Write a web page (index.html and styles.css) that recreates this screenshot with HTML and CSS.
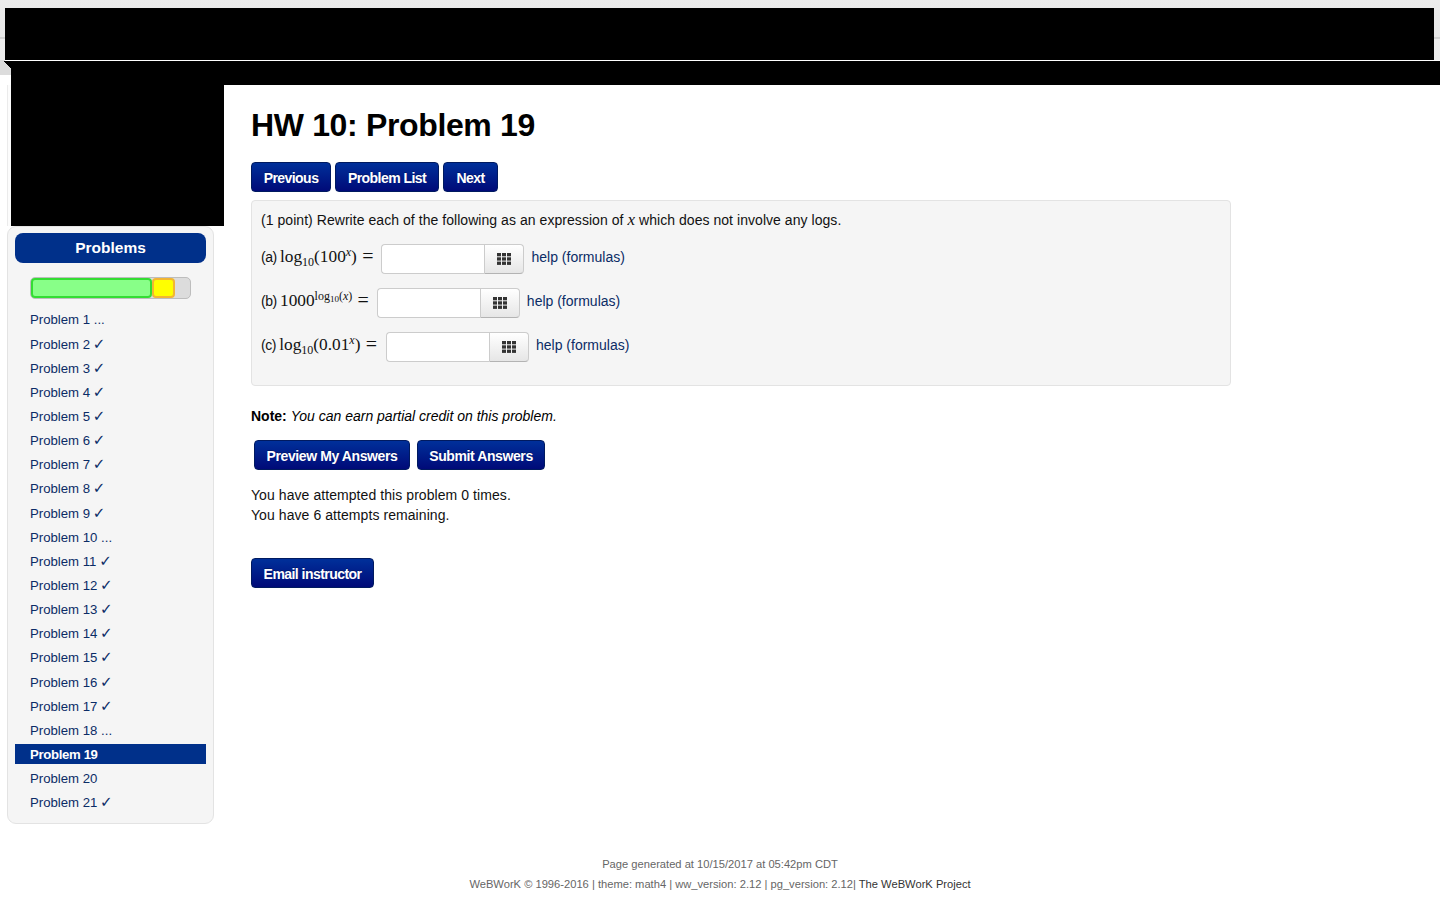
FILE: index.html
```html
<!DOCTYPE html>
<html lang="en">
<head>
<meta charset="utf-8">
<title>HW 10: Problem 19</title>
<link rel="stylesheet" href="styles.css">
</head>
<body>
<svg class="defs" width="0" height="0" aria-hidden="true">
  <symbol id="grid" viewBox="0 0 14 12">
    <rect x="0" y="0" width="4" height="3.3"/><rect x="5" y="0" width="4" height="3.3"/><rect x="10" y="0" width="4" height="3.3"/>
    <rect x="0" y="4.3" width="4" height="3.3"/><rect x="5" y="4.3" width="4" height="3.3"/><rect x="10" y="4.3" width="4" height="3.3"/>
    <rect x="0" y="8.6" width="4" height="3.3"/><rect x="5" y="8.6" width="4" height="3.3"/><rect x="10" y="8.6" width="4" height="3.3"/>
  </symbol>
</svg>
<header class="chrome"><div class="mask mask-top"></div></header>
<div class="strip"></div>
<div class="nav-row"><div class="nav-corner"></div><div class="mask mask-nav"></div></div>
<div class="layout">
  <aside class="side">
    <div class="brand-wrap"><div class="mask mask-brand"></div></div>
    <nav class="panel">
      <h2 class="panel-title">Problems</h2>
      <div class="progress"><div class="seg seg-good"></div><div class="seg seg-part"></div></div>
      <ul class="plist">
        <li><a href="#">Problem 1 ...</a></li>
        <li><a href="#">Problem 2 <span class="chk">✓</span></a></li>
        <li><a href="#">Problem 3 <span class="chk">✓</span></a></li>
        <li><a href="#">Problem 4 <span class="chk">✓</span></a></li>
        <li><a href="#">Problem 5 <span class="chk">✓</span></a></li>
        <li><a href="#">Problem 6 <span class="chk">✓</span></a></li>
        <li><a href="#">Problem 7 <span class="chk">✓</span></a></li>
        <li><a href="#">Problem 8 <span class="chk">✓</span></a></li>
        <li><a href="#">Problem 9 <span class="chk">✓</span></a></li>
        <li><a href="#">Problem 10 ...</a></li>
        <li><a href="#">Problem 11 <span class="chk">✓</span></a></li>
        <li><a href="#">Problem 12 <span class="chk">✓</span></a></li>
        <li><a href="#">Problem 13 <span class="chk">✓</span></a></li>
        <li><a href="#">Problem 14 <span class="chk">✓</span></a></li>
        <li><a href="#">Problem 15 <span class="chk">✓</span></a></li>
        <li><a href="#">Problem 16 <span class="chk">✓</span></a></li>
        <li><a href="#">Problem 17 <span class="chk">✓</span></a></li>
        <li><a href="#">Problem 18 ...</a></li>
        <li class="current"><a href="#">Problem 19</a></li>
        <li><a href="#">Problem 20</a></li>
        <li><a href="#">Problem 21 <span class="chk">✓</span></a></li>
      </ul>
    </nav>
  </aside>
  <main class="main">
    <h1 class="title">HW 10: Problem 19</h1>
    <div class="btn-row">
      <a class="btn btn-prev" href="#">Previous</a>
      <a class="btn btn-list" href="#">Problem List</a>
      <a class="btn btn-next" href="#">Next</a>
    </div>
    <section class="card">
      <p class="lead">(1 point) Rewrite each of the following as an expression of <i class="mi">x</i> which does not involve any logs.</p>
      <div class="answer">
        <span class="label">(a) <span class="math">log<sub>10</sub>(100<sup><i>x</i></sup>) <span class="eq">=</span></span></span>
        <span class="group"><input class="field" type="text" aria-label="answer a"><span class="addon"><svg class="grid-icon"><use href="#grid"/></svg></span></span>
        <a class="help" href="#">help (formulas)</a>
      </div>
      <div class="answer">
        <span class="label">(b) <span class="math">1000<sup class="big-sup">log<sub>10</sub>(<i>x</i>)</sup> <span class="eq">=</span></span></span>
        <span class="group"><input class="field" type="text" aria-label="answer b"><span class="addon"><svg class="grid-icon"><use href="#grid"/></svg></span></span>
        <a class="help" href="#">help (formulas)</a>
      </div>
      <div class="answer">
        <span class="label label-wide">(c) <span class="math">log<sub>10</sub>(0.01<sup><i>x</i></sup>) <span class="eq">=</span></span></span>
        <span class="group"><input class="field" type="text" aria-label="answer c"><span class="addon"><svg class="grid-icon"><use href="#grid"/></svg></span></span>
        <a class="help" href="#">help (formulas)</a>
      </div>
    </section>
    <p class="note"><b>Note:</b> <em>You can earn partial credit on this problem.</em></p>
    <div class="btn-row btn-row-submit">
      <a class="btn btn-preview" href="#">Preview My Answers</a>
      <a class="btn btn-submit" href="#">Submit Answers</a>
    </div>
    <p class="attempts">You have attempted this problem 0 times.<br>You have 6 attempts remaining.</p>
    <a class="btn btn-email" href="#">Email instructor</a>
  </main>
</div>
<footer class="footer">
  <div>Page generated at 10/15/2017 at 05:42pm CDT</div>
  <div>WeBWorK © 1996-2016 | theme: math4 | ww_version: 2.12 | pg_version: 2.12| <a href="#">The WeBWorK Project</a></div>
</footer>
</body>
</html>
```
FILE: styles.css
```css
* { box-sizing: border-box; }
html, body { margin: 0; padding: 0; height: 900px; overflow: hidden; }
body { background: #fff; color: #111; font-family: "Liberation Sans", Arial, sans-serif; font-size: 14px; line-height: 20px; }
.defs { position: absolute; }
a { text-decoration: none; }
.mask { background: #000; }
.chrome { height: 60px; padding: 8px 6px 0 5px; background: linear-gradient(#ececec 0, #e8e8e8 37px, #b9b9b9 38px, #ededed 39px, #ececec 60px); }
.mask-top { height: 52px; }
.strip { height: 1px; background: linear-gradient(90deg, #dcdcdc 5px, #fff 5px); }
.nav-row { display: flex; height: 24px; }
.nav-corner { width: 11px; height: 14px; background: linear-gradient(225deg, #000 5px, #dcdcdc 5.5px); }
.mask-nav { flex: 1; }
.layout { display: grid; grid-template-columns: 224px 1fr; }
.side { display: flex; flex-direction: column; }
.brand-wrap { height: 141px; margin-left: 7px; padding-left: 3px; background: #fcfcfc; border-left: 1px solid #ebebeb; }
.mask-brand { height: 141px; }
.panel { width: 207px; margin-left: 7px; height: 598px; padding: 6px 7px 0; background: #f5f5f5; border: 1px solid #e3e3e3; border-radius: 9px; }
.panel-title { margin: 0; height: 30px; font-size: 15.5px; line-height: 30px; font-weight: 700; text-align: center; color: #fff; background: #00308a; border-radius: 8px; }
.progress { display: flex; width: 161px; height: 22px; margin: 14px 0 10.45px 15px; background: #dcdcdc; border: 1px solid #bdbdbd; border-radius: 5px; }
.seg { height: 100%; border-radius: 4px; }
.seg-good { width: 121px; background: #88ff88; border: 2px solid #33dd33; margin: 0; }
.seg-part { width: 23px; background: #ffff00; border: 2px solid #f2b632; }
.plist { list-style: none; margin: 0; padding: 0; font-size: 13.2px; line-height: 22px; }
.plist li { height: 20px; margin-bottom: 4.15px; padding-left: 15px; }
.plist a { color: #0b2c66; }
.chk { margin-left: -1px; font-family: "DejaVu Sans", sans-serif; font-size: 15px; line-height: 0; font-weight: 700; }
.plist .current { background: #00308a; }
.plist .current a { color: #fff; font-weight: 700; letter-spacing: -0.35px; }
.main { padding: 20px 0 0 27px; }
.title { margin: 0 0 17px; font-size: 32px; line-height: 40px; font-weight: 700; letter-spacing: -0.35px; color: #000; }
.btn-row { display: flex; gap: 4px; }
.btn { display: block; height: 30px; line-height: 30px; padding: 0 12px; color: #fff; font-weight: 700; font-size: 14px; letter-spacing: -0.55px; text-align: center; white-space: nowrap; background: linear-gradient(#00309a, #000a78); border: 1px solid #001a60; border-radius: 4px; text-shadow: 0 -1px 0 rgba(0, 0, 0, .25); }
.btn-prev { width: 80px; padding: 0; }
.btn-list { width: 104px; padding: 0; }
.btn-next { width: 55px; padding: 0; }
.card { width: 980px; height: 186px; margin-top: 8px; padding: 9px 9px 0; background: #f5f5f5; border: 1px solid #e3e3e3; border-radius: 4px; }
.lead { margin: 0 0 14px; letter-spacing: .05px; }
.mi { font-family: "Liberation Serif", serif; font-size: 17px; }
.answer { display: flex; align-items: center; height: 30px; margin-bottom: 14px; }
.math { font-family: "Liberation Serif", serif; font-size: 17.3px; letter-spacing: 0; }
.math sub { font-size: 12px; line-height: 0; vertical-align: -4px; }
.math sup { font-size: 12px; line-height: 0; vertical-align: 6px; }
.math .big-sup { font-size: 12px; }
.math .big-sup sub { font-size: 9px; vertical-align: -2px; }
.eq { margin-left: 1px; font-size: 20px; line-height: 0; vertical-align: -1px; }
.label { margin-right: 8px; padding-bottom: 5px; white-space: nowrap; letter-spacing: -0.5px; }
.label-wide { margin-right: 9px; }
.group { display: flex; height: 30px; }
.field { width: 103px; height: 30px; margin: 0; padding: 0 8px; background: #fff; border: 1px solid #ccc; border-right: 0; border-radius: 4px 0 0 4px; }
.addon { display: flex; align-items: center; justify-content: center; width: 40px; height: 30px; background: linear-gradient(#fff, #e6e6e6); border: 1px solid #ccc; border-bottom-color: #b3b3b3; border-radius: 0 4px 4px 0; }
.grid-icon { width: 14px; height: 12px; fill: #333; }
.help { margin-left: 7px; padding-bottom: 4px; color: #0b2c66; }
.note { margin: 20px 0 14px; color: #000; }
.btn-row-submit { gap: 7px; margin-left: 3px; }
.btn-preview { width: 156px; padding: 0; letter-spacing: -0.4px; }
.btn-submit { width: 128px; padding: 0; letter-spacing: -0.4px; }
.attempts { margin: 15px 0 33px; letter-spacing: .07px; }
.btn-email { width: 123px; padding: 0; }
.footer { margin-top: 30px; text-align: center; font-size: 11.17px; color: #666; }
.footer a { color: #333; }
```
